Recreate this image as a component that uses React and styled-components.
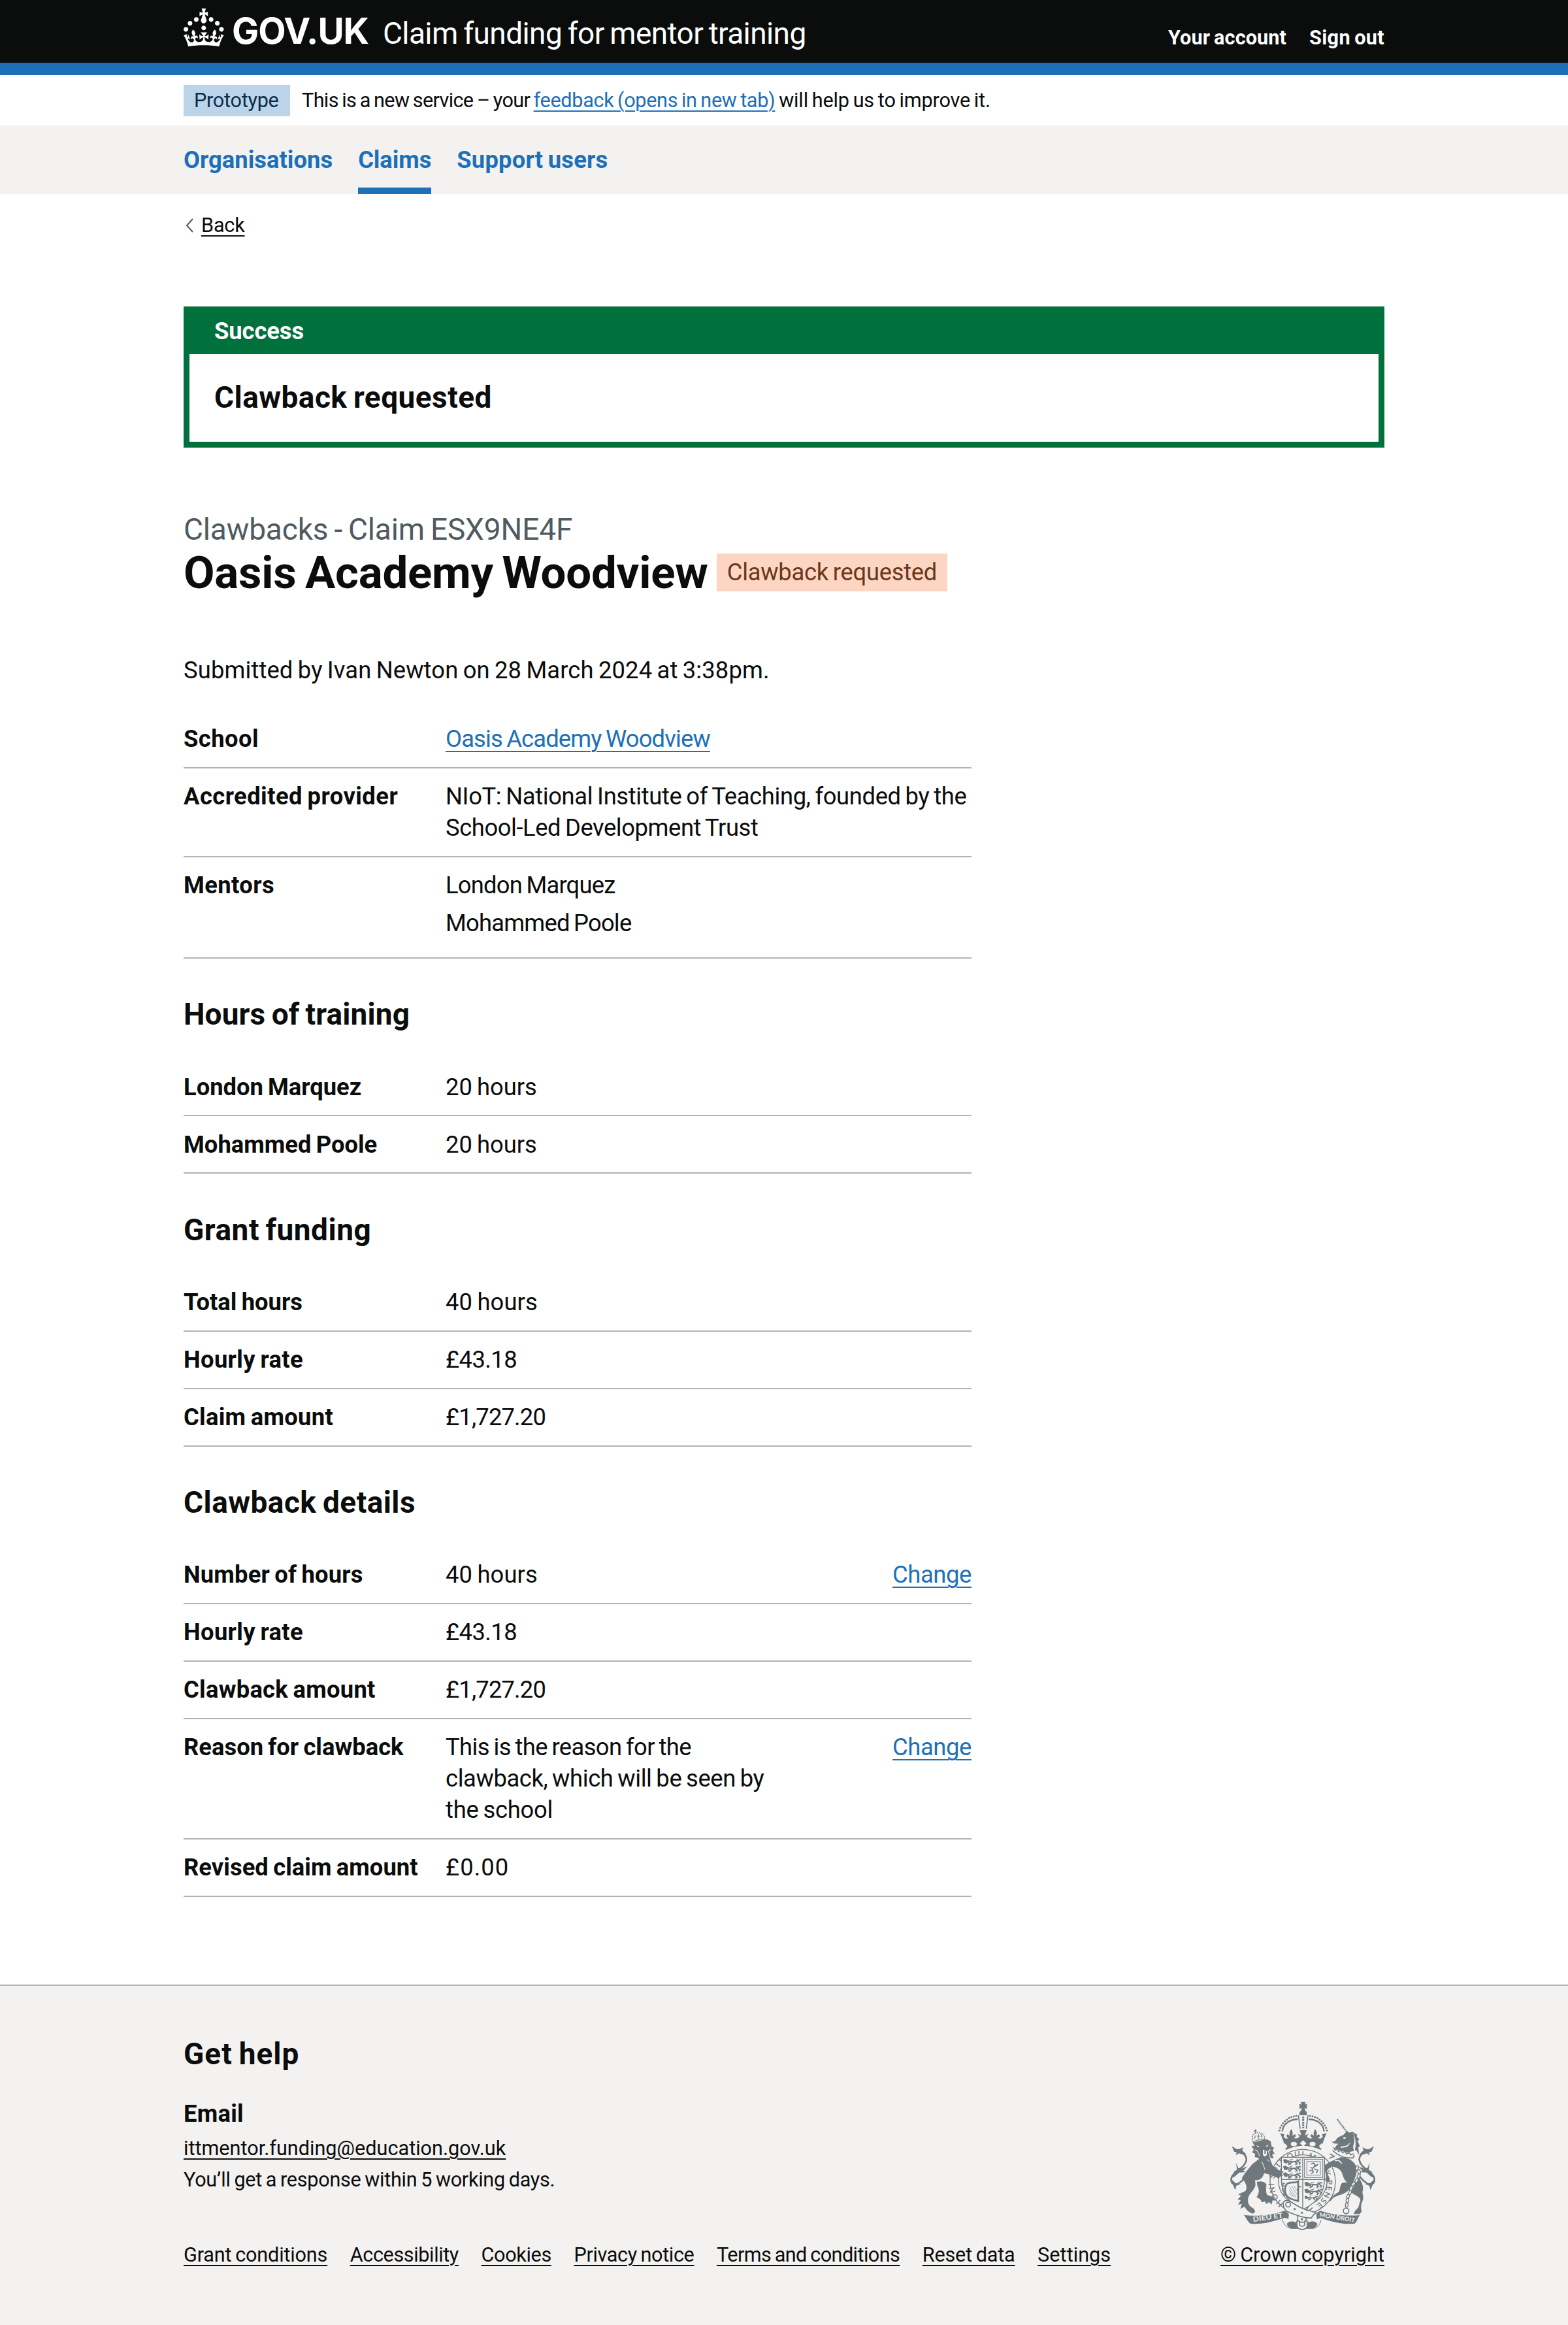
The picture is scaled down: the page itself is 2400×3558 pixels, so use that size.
import React from 'react';
import styled, { createGlobalStyle, css } from 'styled-components';

const color = {
  text: '#0b0c0c',
  secondary: '#505a5f',
  link: '#1d70b8',
  border: '#b1b4b6',
  canvas: '#f3f2f1',
  success: '#00703c',
  crest: '#6f797d',
};

const size = { s: '30.64px', m: '36.4px', l: '46px', xl: '69px' };

const GlobalStyle = createGlobalStyle`
  *, *::before, *::after { box-sizing: border-box; }
  body {
    margin: 0;
    background: #fff;
    color: ${color.text};
    font-family: Roboto, 'Noto Sans', sans-serif;
    -webkit-font-smoothing: antialiased;
  }
  h1, h2, h3, p, dl, dd, dt, ul { margin: 0; padding: 0; font-weight: inherit; }
  ul { list-style: none; }
`;

/* Text run; $track is letter spacing in thousandths of an em. */
const Text = styled.span`
  white-space: nowrap;
  word-spacing: -0.05em;
  letter-spacing: ${(p) => (p.$track || 0) / 1000}em;
`;

const underline = css`
  text-decoration: underline;
  text-decoration-thickness: 2px;
  text-underline-offset: 0.1578em;
`;

const Link = styled.a`
  color: ${(p) => (p.$plain ? color.text : color.link)};
  white-space: nowrap;
  word-spacing: -0.05em;
  letter-spacing: ${(p) => (p.$track || 0) / 1000}em;
  ${underline}
`;

const Container = styled.div`
  width: 1838px;
  margin: 0 auto;
`;

/* Header */
const Header = styled.header`
  height: 115px;
  background: ${color.text};
  border-bottom: 19px solid ${color.link};
  color: #fff;
`;
const HeaderInner = styled(Container)`
  display: flex;
  align-items: flex-start;
`;
const CrownIcon = styled.svg`
  display: block;
  width: 62px;
  height: 58px;
  margin-top: 13px;
  fill: #fff;
`;
const LogoText = styled.span`
  width: 231px;
  margin: 19px 0 0 12px;
  font: 700 55px/56px Inter, 'Liberation Sans', sans-serif;
  letter-spacing: -0.019em;
`;
const ServiceName = styled.span`
  margin-top: 28px;
  font-size: ${size.l};
  line-height: 46px;
`;
const AccountNav = styled.nav`
  display: flex;
  gap: 35px;
  margin: 42px 0 0 auto;
  font-size: ${size.s};
  font-weight: 700;
  line-height: 31px;
`;

/* Phase banner */
const PhaseBanner = styled(Container)`
  display: flex;
  align-items: center;
  height: 77px;
  font-size: ${size.s};
  line-height: 38px;
`;
const PhaseTag = styled.strong`
  width: 163px;
  height: 48px;
  margin-right: 18px;
  padding-left: 16px;
  background: #bbd4ea;
  color: #0c2d4a;
  font-weight: 400;
  line-height: 47px;
`;

/* Primary navigation */
const PrimaryNav = styled.nav`
  height: 105px;
  background: ${color.canvas};
`;
const NavList = styled(Container)`
  display: flex;
  gap: 39px;
`;
const NavItem = styled.a`
  height: 105px;
  padding-top: 35px;
  border-bottom: 10px solid ${(p) => (p.$current ? color.link : 'transparent')};
  color: ${color.link};
  font-size: ${size.m};
  font-weight: 700;
  line-height: 36px;
`;

const BackLink = styled.div`
  display: flex;
  align-items: center;
  gap: 12px;
  height: 38px;
  margin-top: 29px;
  padding-left: 3px;
  font-size: ${size.s};
  line-height: 38px;
`;
const Chevron = styled.svg`
  width: 12px;
  height: 22px;
  fill: none;
  stroke: ${color.secondary};
  stroke-width: 2;
`;

/* Notification banner */
const Notification = styled.section`
  height: 216px;
  margin-top: 105px;
  border: 9px solid ${color.success};
`;
const NotificationTitle = styled.h2`
  height: 64px;
  padding-left: 38px;
  background: ${color.success};
  color: #fff;
  font-size: ${size.m};
  font-weight: 700;
  line-height: 58px;
`;
const NotificationBody = styled.p`
  padding-left: 38px;
  font-size: ${size.l};
  font-weight: 700;
  line-height: 133px;
`;

/* Page heading */
const Caption = styled.p`
  margin-top: 97px;
  color: ${color.secondary};
  font-size: ${size.l};
  line-height: 57px;
`;
const TitleRow = styled.div`
  display: flex;
  align-items: center;
  gap: 13px;
  height: 76px;
`;
const Title = styled.h1`
  font-size: ${size.xl};
  font-weight: 700;
  line-height: 76px;
`;
const StatusTag = styled.strong`
  height: 58px;
  margin-bottom: 3px;
  padding: 0 16px;
  background: #fcd6c3;
  color: #6e3619;
  font-size: ${size.m};
  font-weight: 400;
  line-height: 57px;
`;
const Lead = styled.p`
  margin: 87px 0 38px;
  font-size: ${size.m};
  line-height: 48px;
`;

/* Summary lists */
const SectionHeading = styled.h2`
  margin: 57.45px 0 38.3px;
  font-size: ${size.l};
  font-weight: 700;
  line-height: 57.45px;
`;
const SummaryList = styled.dl`
  width: 1206px;
  font-size: ${size.m};
  line-height: 47.87px;
`;
const SummaryRow = styled.div`
  display: grid;
  grid-template-columns: 401px ${(p) => (p.$action ? '510px 1fr' : '1fr')};
  padding: 19.4px 0 18.8px;
  border-bottom: 2px solid ${color.border};
`;
const Key = styled.dt`
  font-weight: 700;
`;
const Value = styled.dd`
  display: flex;
  flex-direction: column;
  align-items: flex-start;
`;
const Action = styled.dd`
  text-align: right;
`;
const ValueItem = styled.p`
  margin-bottom: 9.55px;
`;

/* Footer */
const Footer = styled.footer`
  margin-top: 134px;
  padding: 76.5px 0 87.8px;
  border-top: 2px solid ${color.border};
  background: ${color.canvas};
  font-size: ${size.s};
  line-height: 38.3px;
`;
const FooterInner = styled(Container)`
  display: flex;
  justify-content: space-between;
  align-items: flex-end;
`;
const FooterHeading = styled.h2`
  font-size: ${size.l};
  font-weight: 700;
  line-height: 57.45px;
`;
const FooterSubheading = styled.h3`
  margin: 38.5px 0 9.7px;
  font-size: ${size.m};
  font-weight: 700;
  line-height: 48px;
`;
const SupportList = styled.ul`
  display: grid;
  gap: 9.6px;
  margin-bottom: 76.7px;
`;
const MetaLinks = styled.ul`
  display: flex;
  gap: 34.6px;
`;
const Copyright = styled.div`
  display: flex;
  flex-direction: column;
  align-items: center;
`;
const Crest = styled.svg`
  display: block;
  width: 230px;
  height: 203.3px;
  margin: 0 0 15.7px 2px;
  fill: ${color.crest};
`;

function Crown() {
  return (
    <CrownIcon viewBox="0 0 32.2 30" aria-hidden="true">
      <path d="M22.6 10.4c-1 .4-2-.1-2.4-1-.4-.9.1-2 1-2.4.9-.4 2 .1 2.4 1s-.1 2-1 2.4m-5.9 6.7c-.9.4-2-.1-2.4-1-.4-.9.1-2 1-2.4.9-.4 2 .1 2.4 1s-.1 2-1 2.4m10.8-3.7c-1 .4-2-.1-2.4-1-.4-.9.1-2 1-2.4.9-.4 2 .1 2.4 1s0 2-1 2.4m3.3 4.8c-1 .4-2-.1-2.4-1-.4-.9.1-2 1-2.4.9-.4 2 .1 2.4 1s-.1 2-1 2.4M17 4.7l2.3 1.2V2.5l-2.3.7-.2-.2.9-3h-3.4l.9 3-.2.2c-.1.1-2.3-.7-2.3-.7v3.4L15 4.7c.1.1.1.2.2.2l-1.3 4c-.1.2-.1.4-.1.6 0 1.1.8 2 1.9 2.2h.7c1-.2 1.9-1.1 1.9-2.1 0-.2 0-.4-.1-.6l-1.3-4c-.1-.2 0-.2.1-.3m-7.6 5.7c.9.4 2-.1 2.4-1 .4-.9-.1-2-1-2.4-.9-.4-2 .1-2.4 1s0 2 1 2.4m-5 3c.9.4 2-.1 2.4-1 .4-.9-.1-2-1-2.4-.9-.4-2 .1-2.4 1s.1 2 1 2.4m-3.2 4.8c.9.4 2-.1 2.4-1 .4-.9-.1-2-1-2.4-.9-.4-2 .1-2.4 1s0 2 1 2.4m14.8 11c4.4 0 8.6.3 12.3.8 1.1-4.5 2.4-7 3.7-8.8l-2.5-.9c.2 1.3.3 1.9 0 2.7-.4-.4-.8-1.1-1.1-2.3l-1.2 4c.7-.5 1.3-.8 2-.9-1.1 2.5-2.6 3.1-3.5 3-1.1-.2-1.7-1.2-1.5-2.1.3-1.2 1.5-1.5 2.1-.1 1.1-2.3-.8-3-2-2.3 1.9-1.9 2.1-3.5.6-5.6-2.1 1.6-2.1 3.2-1.2 5.5-1.2-1.4-3.2-.6-2.5 1.6.9-1.4 2.1-.5 1.9.8-.2 1.1-1.7 2.1-3.5 1.9-2.7-.2-2.9-2.1-2.9-3.6.7-.1 1.9.5 2.9 1.9l.4-4.3c-1.1 1.1-2.1 1.4-3.2 1.4.4-1.2 2.1-3 2.1-3h-5.4s1.7 1.9 2.1 3c-1.1 0-2.1-.2-3.2-1.4l.4 4.3c1-1.4 2.2-2 2.9-1.9-.1 1.5-.2 3.4-2.9 3.6-1.9.2-3.4-.8-3.5-1.9-.2-1.3 1-2.2 1.9-.8.7-2.3-1.2-3-2.5-1.6.9-2.2.9-3.9-1.2-5.5-1.5 2-1.3 3.7.6 5.6-1.2-.7-3.1 0-2 2.3.6-1.4 1.8-1.1 2.1.1.2.9-.3 1.9-1.5 2.1-.9.2-2.4-.5-3.5-3 .6 0 1.2.3 2 .9l-1.2-4c-.3 1.1-.7 1.9-1.1 2.3-.3-.8-.2-1.4 0-2.7l-2.9.9C1.3 23 2.6 25.5 3.7 30c3.7-.5 7.9-.8 12.3-.8" />
    </CrownIcon>
  );
}

/* One heraldic lion passant, about 84 units wide */
function Passant({ x, y }) {
  return (
    <g transform={`translate(${x} ${y})`} fill="none" stroke={color.crest} strokeWidth="6">
      <path d="M2 4l10-2 8 6-4 10-10-2zM6 10h10" fill={color.crest} strokeWidth="4" />
      <path d="M18 10c14-2 26 6 40 1s14-6 22-9M20 15l12 6-8 6M40 13l-8 12M54 13l10 8-8 6M66 10l12 8-4 8" />
      <path d="M60 5l8-5M76 2l6 6M30 4l14-3" strokeWidth="3" />
    </g>
  );
}

function Tail() {
  return (
    <g>
      <path
        d="M125 304C155 312 178 322 176 348 171 386 114 398 107 432 104 456 120 464 138 456 152 450 162 438 176 422"
        fill="none"
        stroke={color.crest}
        strokeWidth="8"
      />
      <path d="M109 284L132 298 144 297 162 289 157 303 176 322 158 322 142 317 127 326 132 313 120 309Z" />
      <path d="M129 360L139 384 152 388 181 377 162 396 173 403 143 405 122 424 112 428 120 400 133 393Z" />
      <path d="M103 432L112 455 125 486 130 466 150 458 128 455Z" />
    </g>
  );
}

const archDots = [
  [328, 212], [332, 200], [338, 189], [345, 179], [353, 170], [362, 162], [372, 155], [383, 150], [394, 147], [405, 145],
];
const chainLinks = [
  [684, 384, 20], [694, 402, -10], [692, 422, 20], [682, 442, 30], [667, 458, 50], [657, 478, 15],
  [652, 497, 20], [643, 515, 20], [640, 534, 5], [637, 554, 5],
];

function RoyalArms() {
  const bg = color.canvas;
  return (
    <Crest viewBox="90 70 690 610" aria-label="Royal coat of arms">
      <defs>
        <path id="garter" d="M346 548A121 122 0 1 1 482 562" />
      </defs>

      {/* Garter */}
      <ellipse cx="435" cy="447" rx="150" ry="148" fill={bg} stroke={color.crest} strokeWidth="4" />
      <text fontFamily="Lato, sans-serif" fontSize="35" fill={color.crest} stroke={color.crest} strokeWidth="0.8">
        <textPath href="#garter" textLength="600">HONI SOIT QUI MAL Y PENSE</textPath>
      </text>
      <ellipse cx="435" cy="440" rx="112" ry="116" fill={bg} stroke={color.crest} strokeWidth="4" />

      {/* Shield */}
      <path d="M337 335H535V440C533 500 500 545 435 575 370 545 338 500 337 440Z" fill={bg} stroke={color.crest} strokeWidth="4" />
      <path d="M435 335V572M337 437H535" stroke={color.crest} strokeWidth="4" />
      <Passant x={345} y={343} />
      <Passant x={345} y={374} />
      <Passant x={345} y={405} />
      <Passant x={443} y={448} />
      <Passant x={443} y={480} />
      <g transform="translate(443 512) scale(.75)"><Passant x={0} y={0} /></g>
      <g fill="none" stroke={color.crest}>
        <rect x="443" y="344" width="84" height="84" strokeWidth="3" />
        <rect x="454" y="355" width="62" height="62" strokeWidth="3" />
        <path d="M474 366l10-4 8 8-6 10 18-10M486 380c-8 6-10 14-2 22l-10 8M486 388l18 6-6 14M494 376l12-10M470 382l12 4M466 398l10-4" strokeWidth="5" />
        <path d="M362 458c-12 14-12 44 4 58 14 14 36 16 48 20V446c-14 10-38-2-52 12z" strokeWidth="8" />
        <path d="M374 470l30 50M384 466l24 40M394 464l16 26M372 484l24 36M372 498l14 18" strokeWidth="2" />
        <path d="M352 455h-8v12h8M350 478h-8v10h8M356 500h-8v10h8M412 470h16" strokeWidth="5" />
      </g>

      {/* Imperial crown */}
      <path d="M426 81h22l-4 12 10-4v24l-10-5 2 12c8 4 9 12 8 22h-34c-2-10 1-18 8-22l2-12-10 5V89l10 4z" />
      {archDots.map(([x, y]) => (
        <g key={x}>
          <circle cx={x} cy={y} r="4.6" />
          <circle cx={874 - x} cy={y} r="4.6" />
        </g>
      ))}
      <g fill="none" stroke={color.crest}>
        <path d="M341 216C345 182 372 162 412 160M533 216C529 182 502 162 462 160" strokeWidth="7" />
        <path d="M415 142L423 204M459 142L451 204" strokeWidth="5" />
        <path d="M437 148V202" strokeWidth="9" strokeDasharray="8 4" />
      </g>
      <path d="M329 224l22 6-4 8c4 12 14 14 22 8-8-2-12-12-4-16 6 2 8 4 10 8 0-10-4-18 7-32 10 14 6 22 6 32 2-4 6-8 12-8 6 6 2 14-6 16 10 6 22 2 26-8l-8-8c8 0 12 2 16 4-2-8-4-18-8-24h34c-4 6-6 16-8 24 4-2 8-4 16-4l-8 8c4 10 16 14 26 8-8-2-12-10-6-16 6 0 10 4 12 8 0-10-4-18 6-32 11 14 7 22 7 32 2-4 4-6 10-8 8 4 4 14-4 16 8 6 18 4 22-8l-4-8 22-6c-10 22-20 46-26 78-54-26-108-26-162 0-6-32-16-56-26-78z" />
      <g fill={bg}>
        <ellipse cx="394" cy="274" rx="14" ry="10" />
        <ellipse cx="480" cy="274" rx="14" ry="10" />
        <path d="M437 257l15 14-15 14-15-14zM351 270l13 12-5 13-13-7zM523 270l-13 12 5 13 13-7z" />
      </g>

      {/* Supporters' tails */}
      <Tail />
      <g transform="translate(871 0) scale(-1 1)"><Tail /></g>

      {/* Lion */}
      <path d="M238 340L205 365C185 390 165 412 155 432 176 452 182 474 172 490L138 505 152 512 136 528 150 532 138 552 155 550 148 572 168 562C176 576 186 588 206 594L217 585 210 571 195 561C182 550 180 530 188 512 196 495 215 482 218 462L216 440C232 442 246 435 252 422L258 408 285 415 310 425 326 434 330 424 346 418 336 410 348 402 318 392 298 375 288 352 262 338Z" />
      <path d="M224 448C240 443 258 445 268 458 268 480 264 495 272 508L300 518 310 535 297 532 292 552 280 540 268 550 262 538 248 542 240 528 223 518C236 500 236 480 227 468Z" />
      <path d="M206 268L214 284 199 282 210 300 202 312 217 320 214 334 232 338 240 358 250 345 268 350 288 352 284 338 302 340 294 322 306 318 297 305 303 290 292 286 288 262 270 252 240 258Z" />
      <path d="M248 356L262 392M282 354L270 344M276 304l10 34M226 306l12 24" fill="none" stroke={bg} strokeWidth="3" />
      <path d="M252 300v22c2 12 16 12 18 0v-14l-5-6v16l-6 1v-17zM222 280l16 6-10 3zM278 278l-14 6 9 3zM216 298l12 8-8 2zM286 296l-8 12 9-2z" fill={bg} />
      <g fill="none" stroke={color.crest} strokeWidth="4">
        <path d="M206 266C202 238 205 226 220 224 238 218 258 226 260 244L258 256" strokeDasharray="5 3" />
        <path d="M206 266Q232 250 262 252M209 273Q234 260 266 260M217 207v18M210 214h14" />
        <path d="M214 252q0-14 6-18M232 250v-22M248 248q0-14-6-20M214 242h8M226 238h12M242 238h8" strokeWidth="3" />
      </g>

      {/* Unicorn */}
      <path d="M593 160L637 218" stroke={color.crest} strokeWidth="6" strokeDasharray="9 2" />
      <path d="M567 264L582 262 596 244 622 232 638 214 650 222 664 217 670 236 672 262 666 288 670 306 640 312 600 300 582 294 590 280 600 273 580 272Z" />
      <path d="M664 218L686 232 682 238 695 254 687 260 697 284 690 290 694 324 680 302 674 304C682 275 678 245 664 218Z" />
      <path d="M618 246l10-5 6 6-8 4zM606 286c20 0 38-4 46-20-2 18-18 26-42 25z" fill={bg} />
      <path d="M576 290l8 12 8-6 8 13 10-8 8 13 12-7 6 13 12-7 8 11 12-6M572 304q40 38 94 34l6-14M560 320l16 8M556 340l26-10" fill="none" stroke={color.crest} strokeWidth="5" />
      <path d="M535 372C548 362 582 344 612 334 650 338 676 356 683 386 686 410 672 436 664 462 650 490 620 506 602 509L576 520 558 540 562 522 582 506 602 492 610 460C616 448 630 450 641 452 622 440 620 416 612 400 604 388 592 382 574 378L552 388 545 402 560 436 550 452 538 440 542 424Z" />
      <path d="M568 378q-4 24 10 34M582 352q20-8 32 12" fill="none" stroke={bg} strokeWidth="5" />
      <path d="M692 426C706 448 714 466 712 484 704 500 718 512 711 532 704 546 702 556 703 570L706 584 696 596 668 596 676 580 690 566 700 532C700 516 668 508 656 494L672 462Z" />
      <g fill={bg} stroke={color.crest} strokeWidth="4">
        {chainLinks.map(([x, y, r]) => (
          <ellipse key={y} cx={x} cy={y} rx="6" ry="11" transform={`rotate(${r} ${x} ${y})`} />
        ))}
        <circle cx="634" cy="581" r="13" strokeWidth="5" />
      </g>

      {/* Motto scroll */}
      <path d="M164 600C220 608 290 602 352 580L366 590C378 600 366 606 371 618L352 612C300 630 250 644 197 640 182 634 178 614 164 600Z" />
      <path d="M697 601C640 606 570 602 516 580L500 590C494 600 502 606 498 620L516 614C570 632 620 645 672 640 686 632 686 614 697 601Z" />
      <text fontFamily="Lato, sans-serif" fontWeight="700" fontSize="31" fill={bg} transform="translate(208 631) rotate(-8)" textLength="138" lengthAdjust="spacingAndGlyphs">DIEU ET</text>
      <text fontFamily="Lato, sans-serif" fontWeight="700" fontSize="27" fill={bg} transform="translate(511 608) rotate(9)" textLength="164" lengthAdjust="spacingAndGlyphs">MON DROIT</text>

      {/* Belt and buckle */}
      <path d="M362 640C372 626 392 628 405 634L412 660C390 666 366 662 362 640ZM502 640C492 626 472 628 459 634L452 660C476 666 498 662 502 640Z" />
      <path d="M340 618Q350 655 380 662H484Q512 656 520 622" fill="none" stroke={color.crest} strokeWidth="3" />
      <g fill={bg} stroke={color.crest} strokeWidth="5">
        <path d="M412 595h38v38h-38z" />
        <path d="M345 548C345 534 362 530 376 537 400 552 436 578 468 580L496 590 484 600 474 614C440 614 400 600 360 582 350 572 345 560 345 548Z" />
        <circle cx="368" cy="552" r="11" />
        <path d="M408 628v22c6 22 42 22 48 0v-22h-12v18c-4 8-20 8-24 0v-18z" />
        <path d="M450 580L462 560M462 582L480 566" />
      </g>
      <circle cx="398" cy="573" r="5" />
      <circle cx="431" cy="590" r="5" />
      <circle cx="431" cy="619" r="5" />
    </Crest>
  );
}

const Cell = ({ text, track }) => <Text $track={track}>{text}</Text>;

function Row({ k, lines, link, list, action }) {
  return (
    <SummaryRow $action={action}>
      <Key><Cell text={k[0]} track={k[1]} /></Key>
      <Value>
        {lines.map(([text, track]) => {
          if (link) return <Link key={text} $track={track}>{text}</Link>;
          if (list) return <ValueItem key={text}><Cell text={text} track={track} /></ValueItem>;
          return <Cell key={text} text={text} track={track} />;
        })}
      </Value>
      {action && <Action><Link $track={-11}>Change</Link></Action>}
    </SummaryRow>
  );
}

const sections = [
  {
    rows: [
      { k: ['School', 12], lines: [['Oasis Academy Woodview', -24]], link: true },
      {
        k: ['Accredited provider', 12],
        lines: [['NIoT: National Institute of Teaching, founded by the', -10], ['School-Led Development Trust', -12]],
      },
      { k: ['Mentors', 11], lines: [['London Marquez', -22], ['Mohammed Poole', -22]], list: true },
    ],
  },
  {
    title: ['Hours of training', 3],
    rows: [
      { k: ['London Marquez', -1], lines: [['20 hours', -1]] },
      { k: ['Mohammed Poole', 0], lines: [['20 hours', -1]] },
    ],
  },
  {
    title: ['Grant funding', 11],
    rows: [
      { k: ['Total hours', 0], lines: [['40 hours', 3]] },
      { k: ['Hourly rate', 9], lines: [['£43.18', -16]] },
      { k: ['Claim amount', 7], lines: [['£1,727.20', -23]] },
    ],
  },
  {
    title: ['Clawback details', 10],
    rows: [
      { k: ['Number of hours', 4], lines: [['40 hours', 3]], action: true },
      { k: ['Hourly rate', 9], lines: [['£43.18', -16]] },
      { k: ['Clawback amount', 7], lines: [['£1,727.20', -23]] },
      {
        k: ['Reason for clawback', 0],
        lines: [['This is the reason for the', -17], ['clawback, which will be seen by', -11], ['the school', -7]],
        action: true,
      },
      { k: ['Revised claim amount', 1], lines: [['£0.00', 28]] },
    ],
  },
];

const metaLinks = [
  ['Grant conditions', -6], ['Accessibility', -13], ['Cookies', -12], ['Privacy notice', -12],
  ['Terms and conditions', -19], ['Reset data', -7], ['Settings', 1],
];

export default function App() {
  return (
    <>
      <GlobalStyle />
      <Header>
        <HeaderInner>
          <Crown />
          <LogoText>GOV.UK</LogoText>
          <ServiceName><Text $track={-13}>Claim funding for mentor training</Text></ServiceName>
          <AccountNav>
            <Text $track={3}>Your account</Text>
            <Text $track={10}>Sign out</Text>
          </AccountNav>
        </HeaderInner>
      </Header>

      <PhaseBanner>
        <PhaseTag><Text $track={-9}>Prototype</Text></PhaseTag>
        <p>
          <Text $track={-21}>This is a new service – your </Text>
          <Link $track={-11}>feedback (opens in new tab)</Link>
          <Text $track={-6}> will help us to improve it.</Text>
        </p>
      </PhaseBanner>

      <PrimaryNav>
        <NavList>
          <NavItem><Text>Organisations</Text></NavItem>
          <NavItem $current><Text $track={-3}>Claims</Text></NavItem>
          <NavItem><Text $track={5}>Support users</Text></NavItem>
        </NavList>
      </PrimaryNav>

      <Container as="main">
        <BackLink>
          <Chevron viewBox="0 0 12 22"><path d="M11 1L2 11l9 10" /></Chevron>
          <Link $plain $track={-6}>Back</Link>
        </BackLink>

        <Notification>
          <NotificationTitle><Text $track={-3}>Success</Text></NotificationTitle>
          <NotificationBody><Text $track={10}>Clawback requested</Text></NotificationBody>
        </Notification>

        <Caption><Text $track={-3}>Clawbacks - Claim ESX9NE4F</Text></Caption>
        <TitleRow>
          <Title><Text $track={-3.5}>Oasis Academy Woodview</Text></Title>
          <StatusTag><Text $track={-8}>Clawback requested</Text></StatusTag>
        </TitleRow>
        <Lead><Text $track={3}>Submitted by Ivan Newton on 28 March 2024 at 3:38pm.</Text></Lead>

        {sections.map((section, i) => (
          <section key={i}>
            {section.title && (
              <SectionHeading><Cell text={section.title[0]} track={section.title[1]} /></SectionHeading>
            )}
            <SummaryList>
              {section.rows.map((row) => <Row key={row.k[0]} {...row} />)}
            </SummaryList>
          </section>
        ))}
      </Container>

      <Footer>
        <FooterInner>
          <div>
            <FooterHeading><Text $track={21}>Get help</Text></FooterHeading>
            <FooterSubheading><Text $track={7}>Email</Text></FooterSubheading>
            <SupportList>
              <li><Link $plain>ittmentor.funding@education.gov.uk</Link></li>
              <li><Text $track={-9}>You’ll get a response within 5 working days.</Text></li>
            </SupportList>
            <MetaLinks>
              {metaLinks.map(([text, track]) => (
                <li key={text}><Link $plain $track={track}>{text}</Link></li>
              ))}
            </MetaLinks>
          </div>
          <Copyright>
            <RoyalArms />
            <Link $plain $track={1}>© Crown copyright</Link>
          </Copyright>
        </FooterInner>
      </Footer>
    </>
  );
}
